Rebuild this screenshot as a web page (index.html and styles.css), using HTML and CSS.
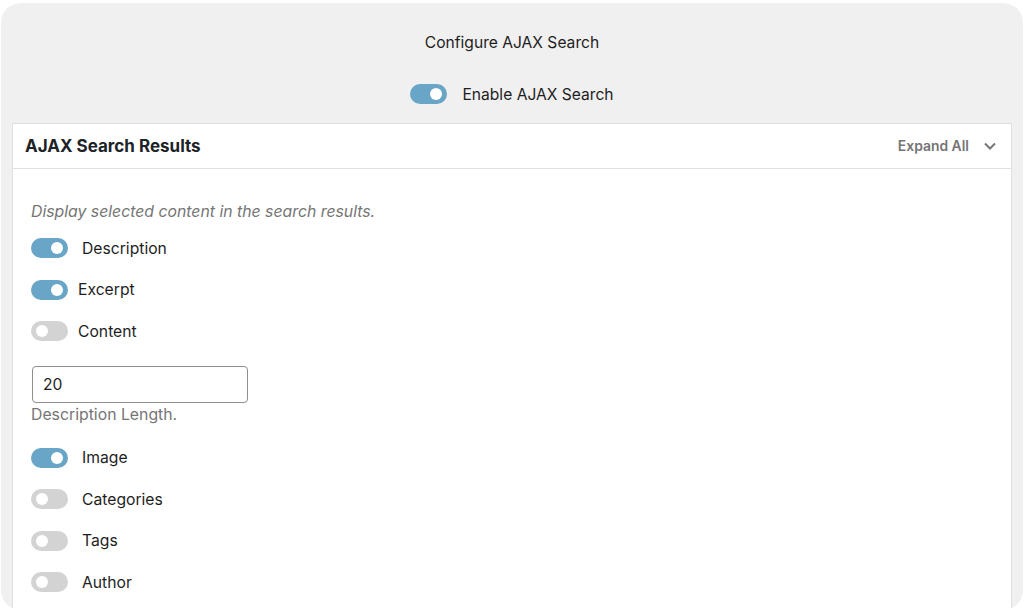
FILE: index.html
```html
<!DOCTYPE html>
<html lang="en">
<head>
    <meta charset="UTF-8">
    <meta name="viewport" content="width=device-width, initial-scale=1.0">
    <title>Configure AJAX Search</title>

    <link rel="stylesheet" href="styles.css">
</head>
<body>

    <div id="window">
        <div class="top">
            <div class="top_title">Configure AJAX Search</div>
            <div class="top_toggle">
                <span class="toggle on"></span>
                <span class="top_label">Enable AJAX Search</span>
            </div>
        </div>

        <div class="panel">
            <div class="panel_head">
                <h2>AJAX Search Results</h2>
                <div class="expand">
                    Expand All
                    <svg width="14" height="14" viewBox="0 0 14 14">
                        <path d="M2 4.5 L7 9.5 L12 4.5" fill="none" stroke="#757575" stroke-width="2"/>
                    </svg>
                </div>
            </div>

            <div class="panel_body">
                <p class="hint">Display selected content in the search results.</p>

                <div class="row"><span class="toggle on"></span><span class="label wide">Description</span></div>
                <div class="row"><span class="toggle on"></span><span class="label">Excerpt</span></div>
                <div class="row"><span class="toggle"></span><span class="label">Content</span></div>

                <div class="form_field">
                    <input type="text" value="20" />
                    <div class="field_help">Description Length.</div>
                </div>

                <div class="row"><span class="toggle on"></span><span class="label wide">Image</span></div>
                <div class="row"><span class="toggle"></span><span class="label wide">Categories</span></div>
                <div class="row"><span class="toggle"></span><span class="label wide">Tags</span></div>
                <div class="row"><span class="toggle"></span><span class="label wide">Author</span></div>
            </div>
        </div>
    </div>

</body>
</html>
```

FILE: styles.css
```css
body {
    margin: 0;
    background: #ffffff;
    font-family: Inter, "Noto Sans", sans-serif;
    color: #1e1e1e;
}

#window {
    margin: 3px 1px 0 1px;
    height: 607px;
    background: #f0f0f0;
    border-radius: 20px;
    overflow: hidden;
}

.top {
    display: flex;
    flex-direction: column;
    align-items: center;
    padding-top: 30px;
}

.top_title {
    font-size: 15.6px;
    line-height: 20px;
}

.top_toggle {
    display: flex;
    align-items: center;
    gap: 15px;
    margin-top: 31px;
    height: 20px;
}

.top_label {
    font-size: 15.6px;
}

.toggle {
    display: inline-block;
    position: relative;
    width: 37px;
    height: 20px;
    border-radius: 10px;
    background: #d3d3d3;
    flex-shrink: 0;
}

.toggle::after {
    content: "";
    position: absolute;
    top: 4px;
    left: 5px;
    width: 12px;
    height: 12px;
    border-radius: 50%;
    background: #ffffff;
}

.toggle.on {
    background: #68a5c6;
}

.toggle.on::after {
    left: 20px;
}

.panel {
    margin: 19px 11px 0 11px;
    background: #ffffff;
    border: 1px solid #e0e0e0;
    height: 600px;
}

.panel_head {
    display: flex;
    align-items: center;
    justify-content: space-between;
    height: 44px;
    padding: 0 14px 0 12px;
    border-bottom: 1px solid #e0e0e0;
}

.panel_head h2 {
    margin: 0;
    font-size: 17px;
    font-weight: 700;
    color: #1d2327;
}

.expand {
    display: flex;
    align-items: center;
    gap: 14px;
    font-size: 13.9px;
    font-weight: 600;
    color: #757575;
}

.panel_body {
    padding: 33px 18px 0 18px;
}

.hint {
    margin: 0 0 16px 0;
    font-size: 15.8px;
    line-height: 20px;
    font-style: italic;
    color: #757575;
}

.row {
    display: flex;
    align-items: center;
    height: 20px;
    margin-bottom: 21.5px;
}

.label {
    font-size: 15.7px;
    margin-left: 10px;
}

.label.wide {
    margin-left: 14px;
}

.form_field {
    padding-top: 3px;
    margin-bottom: 23px;
}

.form_field input {
    display: block;
    box-sizing: border-box;
    width: 216px;
    height: 37px;
    margin-left: 1px;
    padding: 0 10px;
    border: 1px solid #8c8f94;
    border-radius: 4px;
    font-family: inherit;
    font-size: 15.7px;
    color: #1e1e1e;
}

.field_help {
    margin-top: 2px;
    font-size: 15.8px;
    line-height: 20px;
    color: #757575;
}
```
